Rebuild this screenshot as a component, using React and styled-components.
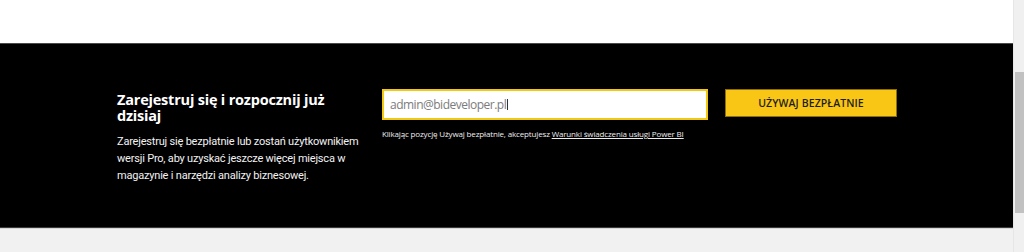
import styled, { createGlobalStyle } from "styled-components";

const GlobalStyle = createGlobalStyle`
  html, body {
    margin: 0;
    padding: 0;
    background: #f1f1f1;
  }
  body {
    font-family: "Open Sans", "Noto Sans", sans-serif;
  }
`;

const App = () => {
  return (
    <>
      <GlobalStyle />
      <Page>
        <Main>
          <TopArea />
          <Band>
            <Intro>
              <h2>Zarejestruj się i rozpocznij już dzisiaj</h2>
              <p>
                Zarejestruj się bezpłatnie lub zostań użytkownikiem
                <br />
                wersji Pro, aby uzyskać jeszcze więcej miejsca w
                <br />
                magazynie i narzędzi analizy biznesowej.
              </p>
            </Intro>

            <SignUp>
              <FormRow>
                <EmailBox>
                  <span>admin@bideveloper.pl</span>
                  <Caret />
                </EmailBox>
                <UseButton type="button">Używaj bezpłatnie</UseButton>
              </FormRow>
              <Terms>
                Klikając pozycję Używaj bezpłatnie, akceptujesz{" "}
                <a href="#">Warunki świadczenia usługi Power BI</a>
              </Terms>
            </SignUp>
          </Band>
          <Bottom />
        </Main>

        <Scrollbar>
          <Thumb />
        </Scrollbar>
      </Page>
    </>
  );
};

const Page = styled.div`
  display: flex;
  width: 1024px;
  height: 252px;
  overflow: hidden;
`;

const Main = styled.div`
  flex: 1;
  display: flex;
  flex-direction: column;
`;

const TopArea = styled.div`
  height: 43px;
  background: #ffffff;
`;

const Band = styled.section`
  display: flex;
  align-items: flex-start;
  height: 185px;
  box-sizing: border-box;
  padding: 45px 0 0 117px;
  background: #000000;
  border-top: 1px solid #4a4a4a;
  border-bottom: 1px solid #3a3a3a;
`;

const Bottom = styled.div`
  flex: 1;
  background: #f1f1f1;
  border-top: 1px solid #d6d6d6;
`;

const Intro = styled.div`
  flex: 0 0 265px;
  width: 265px;
  min-width: 0;
  color: #ffffff;

  h2 {
    width: 225px;
    margin: 3px 0 0;
    font-size: 14.5px;
    line-height: 16px;
    font-weight: 700;
    letter-spacing: -0.2px;
  }

  p {
    margin: 9px 0 0;
    font-family: "Roboto", sans-serif;
    font-size: 11px;
    line-height: 17px;
    font-weight: 400;
    letter-spacing: -0.2px;
    white-space: nowrap;
    color: #f2f2f2;
  }
`;

const SignUp = styled.div`
  display: flex;
  flex-direction: column;
`;

const FormRow = styled.div`
  display: flex;
  align-items: flex-start;
  gap: 17px;
`;

const EmailBox = styled.div`
  display: flex;
  align-items: center;
  width: 326px;
  height: 31px;
  box-sizing: border-box;
  padding: 0 6px;
  background: #ffffff;
  border: 2px solid #f2c811;
  font-size: 12px;
  letter-spacing: -0.5px;
  color: #7c7c7c;
  font-weight: 400;
`;

const Caret = styled.span`
  display: inline-block;
  width: 1px;
  height: 11px;
  margin-left: 1px;
  background: #333333;
`;

const UseButton = styled.button`
  width: 172px;
  height: 28px;
  box-sizing: border-box;
  background: #f9c616;
  border: 1px solid #8e6f00;
  color: #1e1e1e;
  font-family: inherit;
  font-size: 10.5px;
  font-weight: 600;
  text-transform: uppercase;
  letter-spacing: 0.1px;
  cursor: pointer;
`;

const Terms = styled.div`
  margin-top: 8px;
  font-size: 8px;
  letter-spacing: -0.15px;
  color: #ededed;

  a {
    color: #ededed;
    text-decoration: underline;
  }
`;

const Scrollbar = styled.div`
  width: 11px;
  background: #f0f0f0;
  border-left: 1px solid #e6e6e6;
  padding-top: 72px;
  box-sizing: border-box;
`;

const Thumb = styled.div`
  width: 9px;
  height: 141px;
  margin-left: 1px;
  background: #c1c1c1;
`;

export default App;
